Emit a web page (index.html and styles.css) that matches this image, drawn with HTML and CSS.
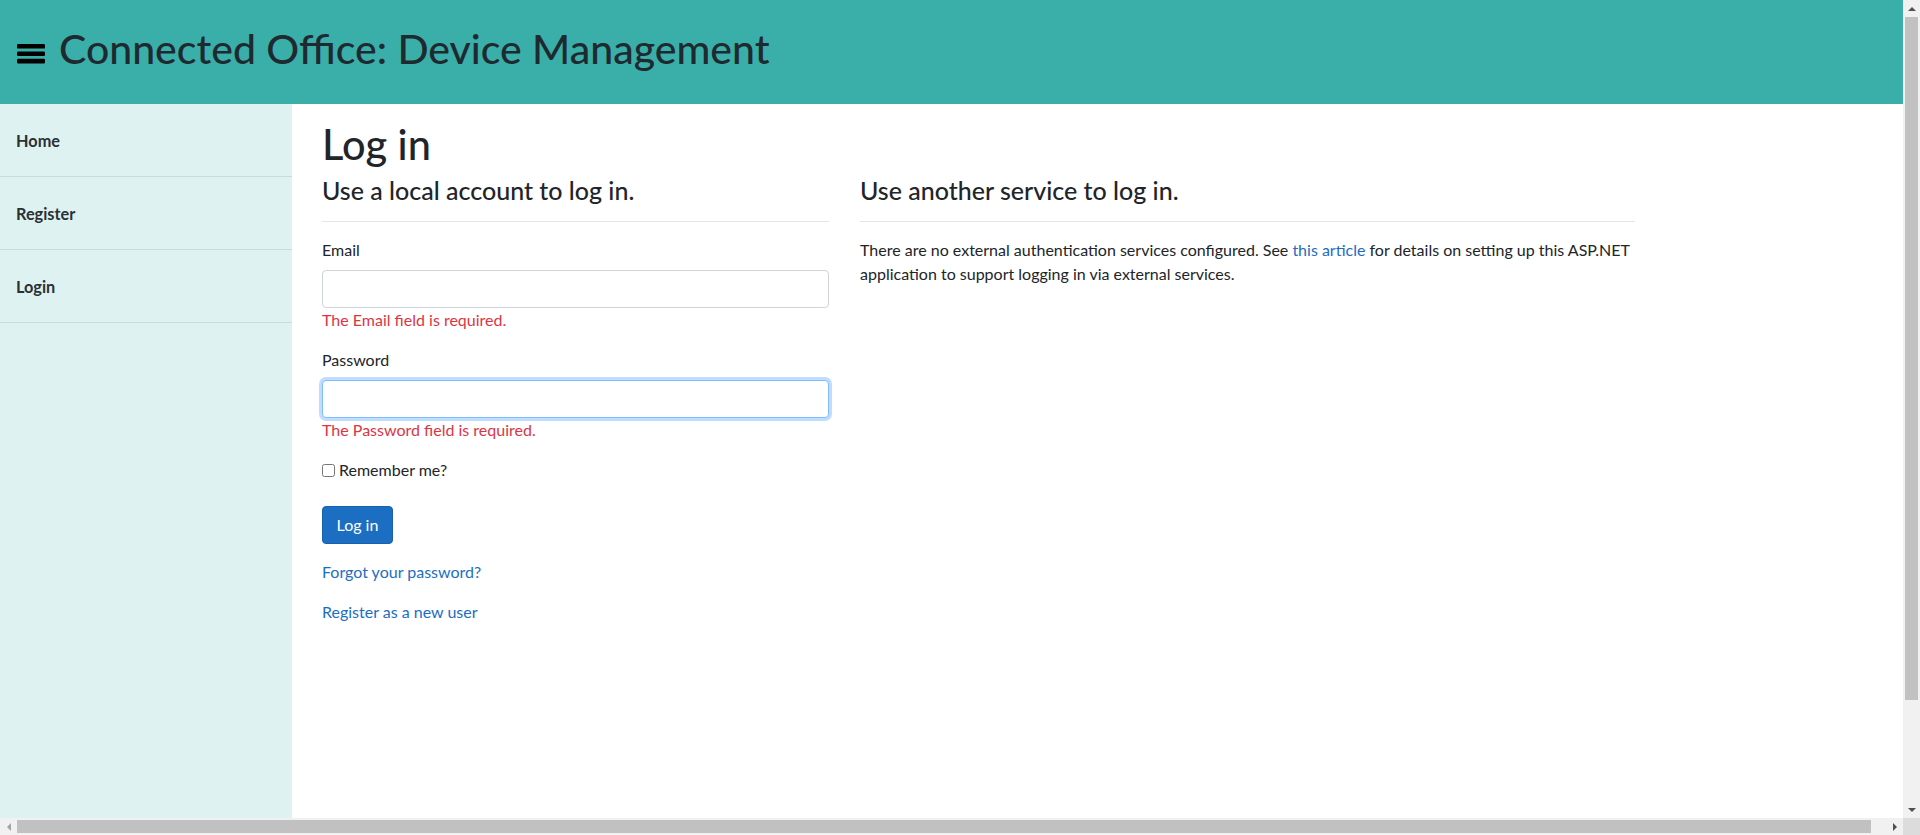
FILE: index.html
```html
<!DOCTYPE html>
<html lang="en">
<head>
<meta charset="utf-8">
<title>Log in - Connected Office</title>
<link rel="stylesheet" href="styles.css">
</head>
<body>
<div class="window">
  <div class="viewport">
    <div class="page">
      <header class="topbar">
        <svg class="menu-icon" width="28" height="20" viewBox="0 0 28 20" aria-hidden="true">
          <rect x="0" y="0" width="28" height="4.6" rx="1.2"/>
          <rect x="0" y="7.4" width="28" height="4.6" rx="1.2"/>
          <rect x="0" y="14.8" width="28" height="4.6" rx="1.2"/>
        </svg>
        <h1 class="brand">Connected Office: Device Management</h1>
      </header>
      <div class="layout">
        <nav class="sidebar">
          <a class="nav-item" href="#">Home</a>
          <a class="nav-item" href="#">Register</a>
          <a class="nav-item" href="#">Login</a>
        </nav>
        <main class="content">
          <h1 class="page-title">Log in</h1>
          <div class="row">
            <section class="col-left">
              <h4 class="section-title">Use a local account to log in.</h4>
              <hr class="divider">
              <div class="form-group">
                <label class="field-label" for="email">Email</label>
                <input class="form-control" id="email" type="email">
                <span class="text-danger">The Email field is required.</span>
              </div>
              <div class="form-group">
                <label class="field-label" for="password">Password</label>
                <input class="form-control is-focused" id="password" type="password">
                <span class="text-danger">The Password field is required.</span>
              </div>
              <div class="form-group">
                <label class="check-label"><input class="check" type="checkbox"> Remember me?</label>
              </div>
              <div class="form-group">
                <button class="btn-primary" type="button">Log in</button>
              </div>
              <p class="link-line"><a class="link" href="#">Forgot your password?</a></p>
              <p class="link-line"><a class="link" href="#">Register as a new user</a></p>
            </section>
            <section class="col-right">
              <h4 class="section-title">Use another service to log in.</h4>
              <hr class="divider">
              <p class="text">There are no external authentication services configured. See <a class="link" href="#">this article</a> for details on setting up this ASP.NET application to support logging in via external services.</p>
            </section>
          </div>
        </main>
      </div>
    </div>
    <div class="vscroll">
      <div class="sb-btn"><span class="tri tri-up"></span></div>
      <div class="vtrack"><div class="vthumb"></div></div>
      <div class="sb-btn"><span class="tri tri-down"></span></div>
    </div>
  </div>
  <div class="hscroll">
    <div class="sb-btn"><span class="tri tri-left"></span></div>
    <div class="htrack"><div class="hthumb"></div></div>
    <div class="sb-btn"><span class="tri tri-right"></span></div>
    <div class="sb-corner"></div>
  </div>
</div>
</body>
</html>
```

FILE: styles.css
```css
* { box-sizing: border-box; }
html, body { margin: 0; padding: 0; }
body {
  font-family: "Segoe UI", Lato, "Liberation Sans", sans-serif;
  font-size: 16px;
  line-height: 1.5;
  color: #212529;
  background: #fff;
  height: 835px;
  overflow: hidden;
}
.window { display: flex; flex-direction: column; height: 835px; }
.viewport { display: flex; flex: 1; min-height: 0; }
.page { width: 1903px; display: flex; flex-direction: column; overflow: hidden; }

.topbar {
  height: 104px;
  background: #3aafa9;
  display: flex;
  align-items: flex-start;
  padding-left: 17px;
  flex-shrink: 0;
}
.menu-icon { fill: #000; margin: 44px 14px 0 0; }
.brand { margin: 25px 0 0; font-size: 41px; font-weight: 500; line-height: 48px; color: #1f2a30; }

.layout { display: flex; flex: 1; }
.sidebar { width: 292px; background: #def2f1; flex-shrink: 0; display: flex; flex-direction: column; }
.nav-item {
  display: block;
  height: 73px;
  padding-top: 1px;
  line-height: 71px;
  padding-left: 16px;
  font-size: 16.3px;
  font-weight: 700;
  color: #2b3035;
  text-decoration: none;
  border-bottom: 1px solid #c7dcdb;
}

.content { flex: 1; padding: 16px 0 0 30px; }
.page-title { margin: 0 0 8px; font-size: 41.5px; font-weight: 500; line-height: 48px; }
.row { display: flex; gap: 31px; }
.col-left { width: 507px; }
.col-right { width: 775px; }
.section-title { margin: 0; font-size: 25px; font-weight: 500; line-height: 29px; }
.divider { margin: 16px 0; border: 0; border-top: 1px solid rgba(0,0,0,.1); }
.form-group { margin-bottom: 16px; }
.field-label { display: block; margin-bottom: 8px; }
.form-control {
  display: block;
  width: 100%;
  height: 38px;
  padding: 6px 12px;
  font: inherit;
  border: 1px solid #ced4da;
  border-radius: 4px;
  background: #fff;
}
.form-control.is-focused { border-color: #80bdff; box-shadow: 0 0 0 3px rgba(0,123,255,.25); outline: 0; }
.text-danger { display: block; color: #dc3545; }
.check-label { display: inline-flex; align-items: center; margin-bottom: 8px; vertical-align: top; }
.check { margin: 0 4px 0 0; width: 13px; height: 13px; }
.btn-primary {
  display: block;
  font: inherit;
  color: #fff;
  background: #1b6ec2;
  border: 1px solid #1861ac;
  border-radius: 4px;
  height: 38px;
  padding: 6px 13.5px;
}
.link { color: #1b6ec2; text-decoration: none; }
.link-line { margin: 0 0 16px; }
.text { margin: 0 0 16px; width: calc(100% + 12px); }

.vscroll { width: 17px; background: #f1f1f1; display: flex; flex-direction: column; flex-shrink: 0; }
.vtrack { flex: 1; }
.vthumb { height: 683px; margin: 0 2px; background: #c1c1c1; }
.hscroll { height: 17px; background: #f1f1f1; display: flex; flex-shrink: 0; }
.htrack { flex: 1; padding: 2px 0; }
.hthumb { width: 1854px; height: 13px; background: #c1c1c1; }
.sb-btn { width: 17px; height: 17px; display: flex; align-items: center; justify-content: center; flex-shrink: 0; }
.sb-corner { width: 17px; height: 17px; background: #dcdcdc; }
.tri { width: 0; height: 0; border: 4px solid transparent; }
.tri-up { border-bottom-color: #505050; border-top-width: 0; }
.tri-down { border-top-color: #505050; border-bottom-width: 0; }
.tri-left { border-right-color: #a3a3a3; border-left-width: 0; }
.tri-right { border-left-color: #505050; border-right-width: 0; }
```
